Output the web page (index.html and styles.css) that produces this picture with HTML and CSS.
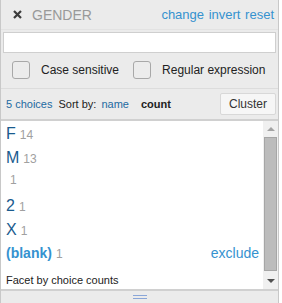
FILE: index.html
```html
<!DOCTYPE html>
<html lang="en">
<head>
  <meta charset="UTF-8" />
  <title>Facet — Gender</title>
  <link rel="stylesheet" href="styles.css">
</head>
<body>
  <div class="facet">
    <div class="facet-title">
      <svg class="facet-close" width="9" height="9" viewBox="0 0 9 9">
        <path d="M1 1 L8 8 M8 1 L1 8" stroke="#3c3c3c" stroke-width="2.2" />
      </svg>
      <span class="facet-name">GENDER</span>
      <span class="facet-links">
        <a href="#">change</a>
        <a href="#">invert</a>
        <a href="#">reset</a>
      </span>
    </div>

    <div class="facet-controls">
      <input class="facet-search" type="text" />
      <div class="facet-options">
        <label class="option"><span class="box"></span>Case sensitive</label>
        <label class="option"><span class="box"></span>Regular expression</label>
      </div>
    </div>

    <div class="facet-summary">
      <span class="choices">5 choices</span>
      <span class="sort">Sort by:</span>
      <a href="#" class="sort-link">name</a>
      <span class="sort-current">count</span>
      <button class="cluster">Cluster</button>
    </div>

    <div class="facet-body">
      <div class="facet-list">
        <div class="choice"><a href="#" class="label">F</a><span class="count">14</span></div>
        <div class="choice"><a href="#" class="label">M</a><span class="count">13</span></div>
        <div class="choice"><a href="#" class="label"></a><span class="count">1</span></div>
        <div class="choice"><a href="#" class="label">2</a><span class="count">1</span></div>
        <div class="choice"><a href="#" class="label">X</a><span class="count">1</span></div>
        <div class="choice blank"><a href="#" class="label">(blank)</a><span class="count">1</span><a href="#" class="exclude">exclude</a></div>
        <div class="facet-note">Facet by choice counts</div>
      </div>
      <div class="scrollbar">
        <span class="arrow up"></span>
        <span class="thumb"></span>
        <span class="arrow down"></span>
      </div>
    </div>

    <div class="facet-resize"><span class="grip"></span></div>
  </div>
</body>
</html>
```

FILE: styles.css
```css
* { box-sizing: border-box; }
body {
  margin: 0;
  background: #fff;
  font-family: 'Liberation Sans', Arial, sans-serif;
  color: #222;
}

a {
  color: #3592cf;
  text-decoration: none;
}

.facet {
  width: 279px;
  height: 303px;
  border-left: 1px solid #c8c8c8;
  border-right: 1px solid #c8c8c8;
  background: #ebebeb;
  display: flex;
  flex-direction: column;
}

.facet-title {
  height: 30px;
  display: flex;
  align-items: center;
  padding: 0 4px 0 12px;
  border-bottom: 1px solid #e2e2e2;
}

.facet-close {
  margin-right: 10px;
}

.facet-name {
  font-size: 14px;
  color: #999;
  flex-grow: 1;
}

.facet-links {
  font-size: 13px;
}

.facet-links a {
  margin-left: 1px;
}

.facet-controls {
  padding: 2px 2px 0 2px;
  height: 58px;
}

.facet-search {
  display: block;
  width: 100%;
  height: 21px;
  margin: 0;
  border: 1px solid #cfcfcf;
  background: #fff;
}

.facet-options {
  display: flex;
  padding: 8px 0 0 9px;
}

.option {
  display: flex;
  align-items: center;
  font-size: 12px;
  color: #222;
  white-space: nowrap;
  margin-right: 14px;
}

.option .box {
  flex-shrink: 0;
  width: 18px;
  height: 18px;
  border: 1px solid #a8a8a8;
  border-radius: 3px;
  background: #ececec;
  margin-right: 11px;
}

.facet-summary {
  height: 33px;
  display: flex;
  align-items: center;
  padding: 0 2px 0 5px;
  font-size: 11px;
  border-top: 1px solid #dcdcdc;
  border-bottom: 2px solid #d0d0d0;
}

.choices {
  color: #1d6aa1;
  margin-right: 6px;
}

.sort {
  margin-right: 5px;
}

.sort-link {
  margin-right: 12px;
  color: #1d6aa1;
}

.sort-current {
  font-weight: bold;
  flex-grow: 1;
}

.cluster {
  width: 56px;
  height: 22px;
  font-family: inherit;
  font-size: 12px;
  color: #333;
  background: #f6f6f6;
  border: 1px solid #d8d8d8;
  border-radius: 2px;
  padding: 0;
}

.facet-body {
  height: 168px;
  display: flex;
  background: #fff;
}

.facet-list {
  flex-grow: 1;
  padding: 4px 4px 0 5px;
}

.choice {
  height: 24px;
  display: flex;
  align-items: baseline;
}

.choice .label {
  font-size: 16px;
  color: #1a5b8e;
  margin-right: 4px;
}

.choice .count {
  font-size: 12px;
  color: #a0a0a0;
}

.choice.blank .label {
  font-size: 14px;
  font-weight: bold;
  color: #3592cf;
}

.exclude {
  margin-left: auto;
  font-size: 14px;
}

.facet-note {
  font-size: 11px;
  padding-top: 5px;
}

.scrollbar {
  width: 15px;
  background: #f0f0f0;
  display: flex;
  flex-direction: column;
  align-items: center;
}

.arrow {
  width: 0;
  height: 0;
  border-left: 4px solid transparent;
  border-right: 4px solid transparent;
}

.arrow.up {
  border-bottom: 4px solid #a3a3a3;
  margin: 6px 0 6px;
}

.arrow.down {
  border-top: 4px solid #505050;
  margin: 8px 0 6px;
}

.thumb {
  width: 13px;
  flex-grow: 1;
  background: #bcbcbc;
  border: 1px solid #a6a6a6;
}

.facet-resize {
  flex-grow: 1;
  border-top: 2px solid #d0d0d0;
  display: flex;
  justify-content: center;
  padding-top: 4px;
}

.grip {
  width: 14px;
  height: 4px;
  border-top: 1px solid #8aa6d8;
  border-bottom: 1px solid #8aa6d8;
}
```
